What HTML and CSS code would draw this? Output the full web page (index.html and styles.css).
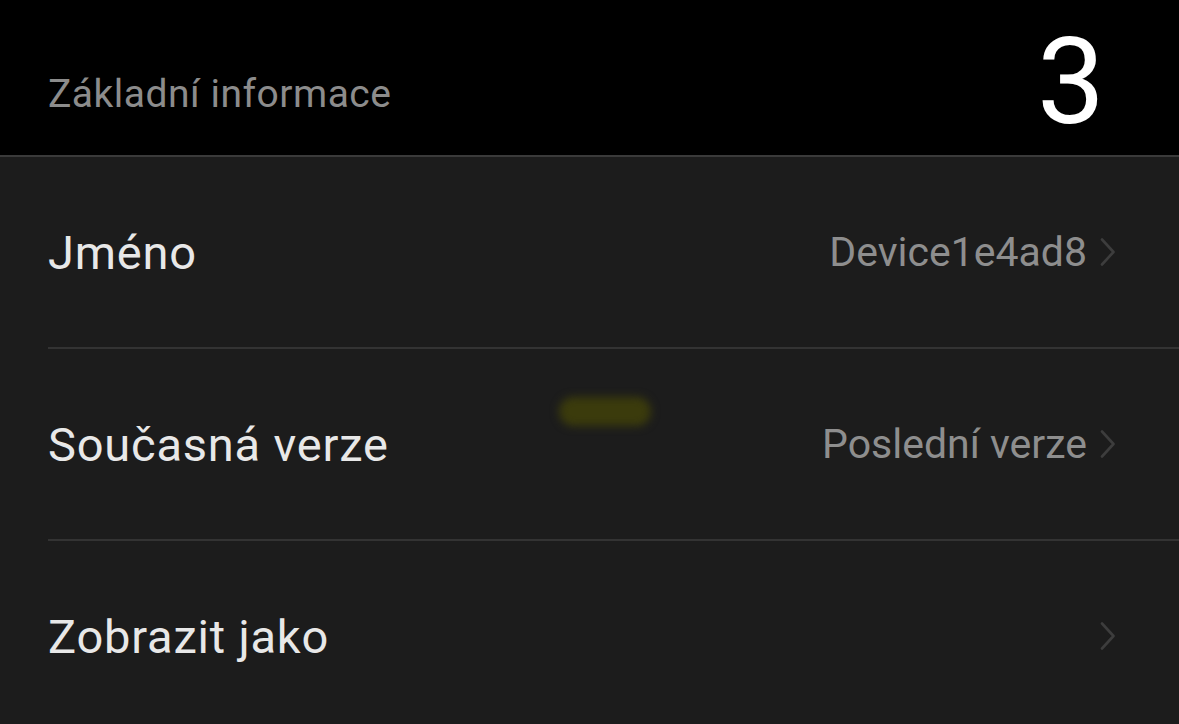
FILE: index.html
```html
<!DOCTYPE html>
<html lang="cs">
<head>
<meta charset="utf-8">
<title>Základní informace</title>
<link rel="stylesheet" href="styles.css">
</head>
<body>
<div class="screen">
  <header class="section-head">
    <span class="section-title">Základní informace</span>
    <span class="badge-num">3</span>
  </header>
  <ul class="list">
    <li class="row">
      <span class="row-title">Jméno</span>
      <span class="row-end">
        <span class="row-value">Device1e4ad8</span>
        <svg class="chev" viewBox="0 0 16 28" width="16" height="28"><path d="M2 1.5 L13.5 14 L2 26.5" fill="none" stroke="currentColor" stroke-width="2.6" stroke-linecap="round" stroke-linejoin="round"/></svg>
      </span>
    </li>
    <li class="row">
      <span class="row-title">Současná verze</span>
      <span class="row-end">
        <span class="row-value">Poslední verze</span>
        <svg class="chev" viewBox="0 0 16 28" width="16" height="28"><path d="M2 1.5 L13.5 14 L2 26.5" fill="none" stroke="currentColor" stroke-width="2.6" stroke-linecap="round" stroke-linejoin="round"/></svg>
      </span>
    </li>
    <li class="row">
      <span class="row-title">Zobrazit jako</span>
      <span class="row-end">
        <svg class="chev" viewBox="0 0 16 28" width="16" height="28"><path d="M2 1.5 L13.5 14 L2 26.5" fill="none" stroke="currentColor" stroke-width="2.6" stroke-linecap="round" stroke-linejoin="round"/></svg>
      </span>
    </li>
  </ul>
  <div class="smudge"></div>
</div>
</body>
</html>
```

FILE: styles.css
```css
html, body {
  margin: 0;
  padding: 0;
  background: #1c1c1c;
}
body {
  font-family: Roboto, "Noto Sans", "Liberation Sans", sans-serif;
  overflow: hidden;
}
.screen {
  position: relative;
  width: 1179px;
  height: 724px;
  background: #1c1c1c;
  overflow: hidden;
}
.section-head {
  height: 155px;
  background: #000;
  border-bottom: 2px solid #3a3a3a;
  display: flex;
  align-items: center;
  justify-content: space-between;
  padding: 0 74px 0 48px;
  box-sizing: content-box;
}
.section-title {
  color: #8c8c8c;
  font-size: 39px;
  padding-top: 32px;
  letter-spacing: 0.5px;
}
.badge-num {
  color: #ffffff;
  font-size: 121px;
  line-height: 1;
  margin-top: 9px;
}
.list {
  list-style: none;
  margin: 0;
  padding: 0 0 0 48px;
}
.row {
  height: 190px;
  display: flex;
  align-items: center;
  justify-content: space-between;
  border-bottom: 2px solid #333333;
  padding-right: 63px;
}
.row:last-child {
  border-bottom: none;
}
.row-title {
  color: #e8e8e8;
  font-size: 47px;
  letter-spacing: 0.8px;
}
.row-end {
  display: flex;
  align-items: center;
  gap: 13px;
}
.row-value {
  color: #8e8e8e;
  font-size: 41px;
  letter-spacing: 0;
}
.chev {
  color: #3d3d3d;
  display: block;
}
.smudge {
  position: absolute;
  left: 559px;
  top: 397px;
  width: 92px;
  height: 29px;
  border-radius: 15px;
  background: #3b3b0c;
  filter: blur(4px);
}
```
